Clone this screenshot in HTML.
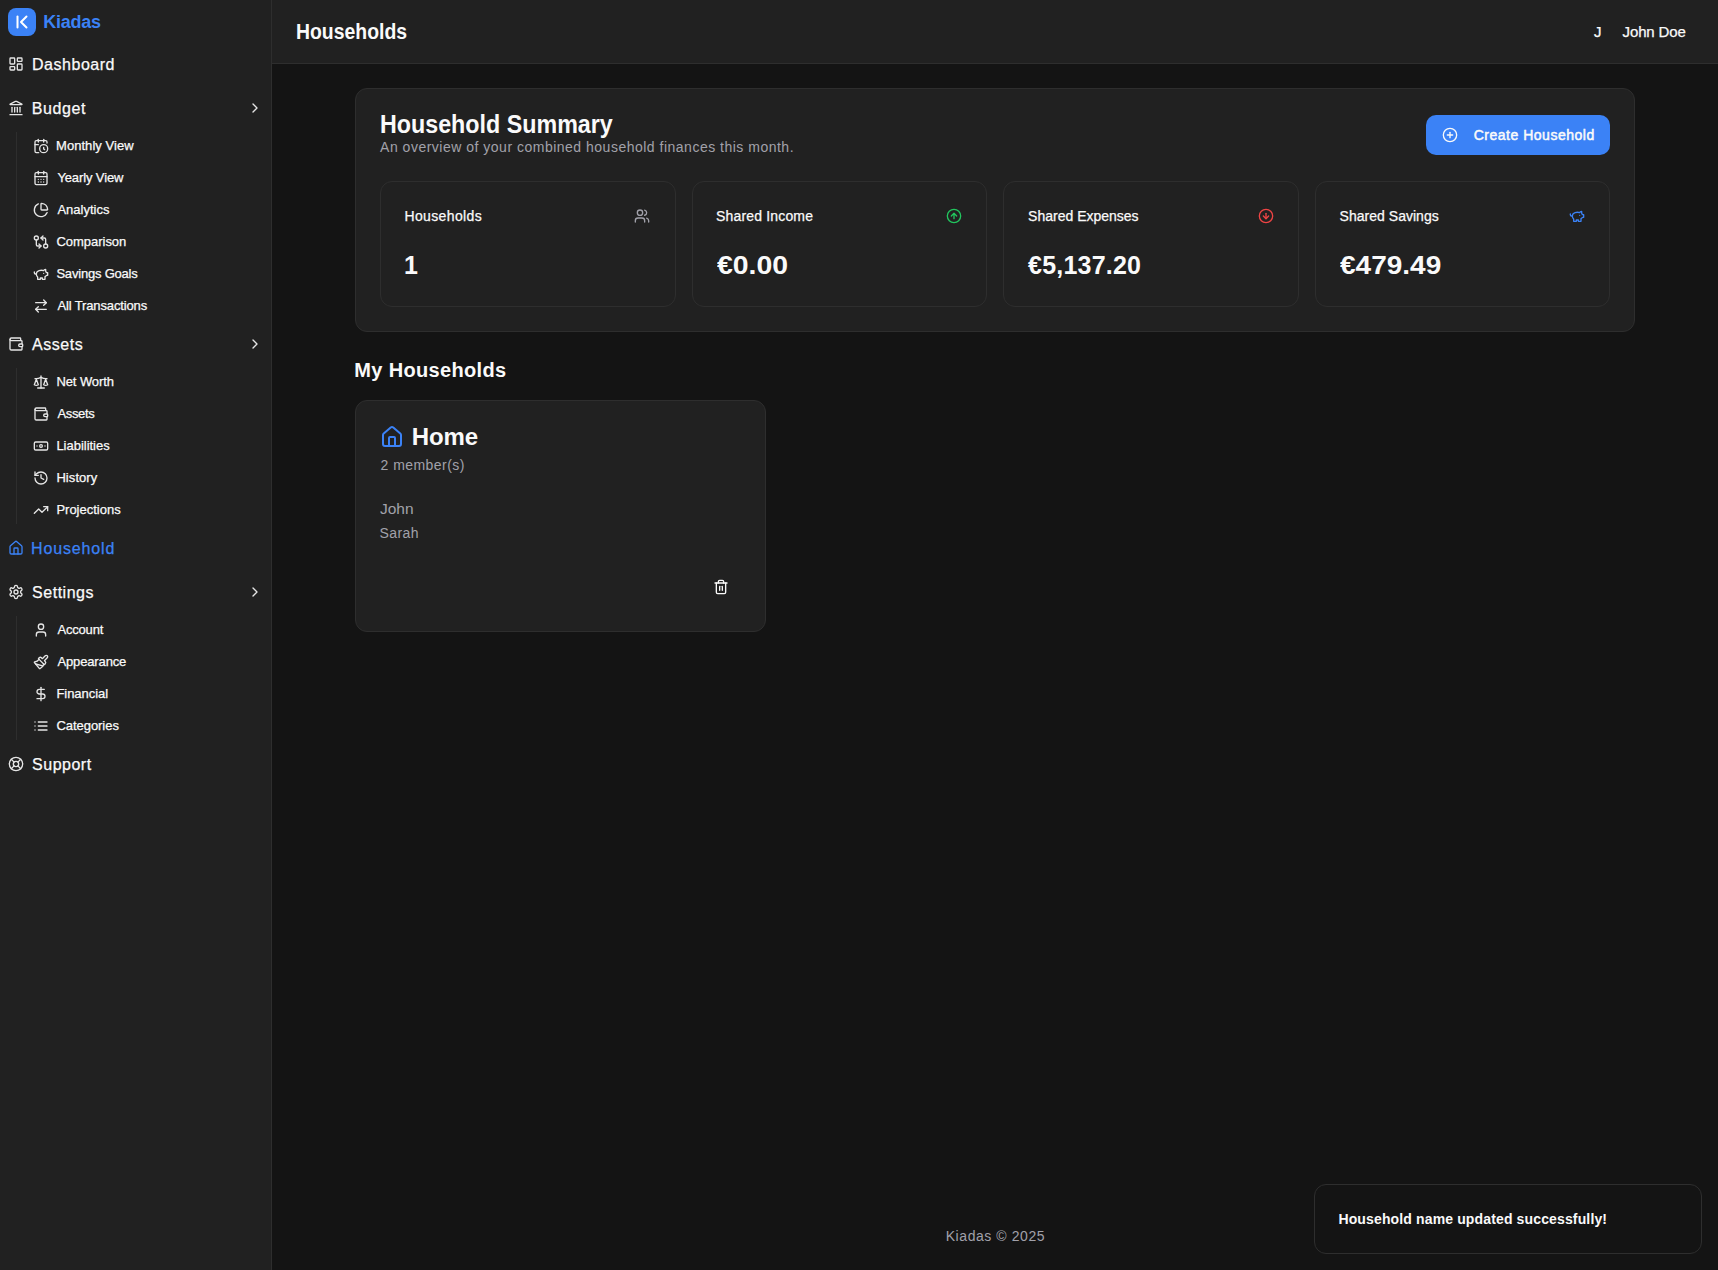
<!DOCTYPE html>
<html><head><meta charset="utf-8">
<style>
*{box-sizing:border-box;margin:0;padding:0}
html,body{width:1718px;height:1270px;overflow:hidden;background:#141414;font-family:"Liberation Sans",sans-serif;color:#fafafa}
.abs{position:absolute}
svg.i{position:absolute;fill:none;stroke:currentColor;stroke-linecap:round;stroke-linejoin:round}
.t{position:absolute;white-space:nowrap;line-height:1}
</style></head>
<body>
<div class="abs" style="left:0px;top:0px;width:272px;height:1270px;background:#212121;border-radius:0px;border-right:1px solid #2e2e2e"></div>
<div class="abs" style="left:8px;top:8px;width:28px;height:28px;background:#3b82f6;border-radius:8px"></div>
<svg class="i" style="left:8px;top:8px;color:#fff" width="28" height="28" viewBox="0 0 28 28" stroke-width="2"><path d="M9.5 8.5V19.5"/><path d="M18.5 8.5 13 14l5.5 5.5"/></svg>
<div class="t" style="left:43.30px;top:13.00px;font-size:18px;font-weight:700;color:#3b82f6;letter-spacing:-0.24px">Kiadas</div>
<svg class="i" style="left:8px;top:56px;color:#e5e5e5" width="16" height="16" viewBox="0 0 24 24" stroke-width="2"><rect width="7" height="9" x="3" y="3" rx="1"/><rect width="7" height="5" x="14" y="3" rx="1"/><rect width="7" height="9" x="14" y="12" rx="1"/><rect width="7" height="5" x="3" y="16" rx="1"/></svg>
<div class="t" style="left:32.00px;top:56.50px;font-size:16px;font-weight:400;color:#fafafa;letter-spacing:0.53px;-webkit-text-stroke:0.25px currentColor">Dashboard</div>
<svg class="i" style="left:8px;top:100px;color:#e5e5e5" width="16" height="16" viewBox="0 0 24 24" stroke-width="2"><path d="M10 18v-7"/><path d="M11.12 2.198a2 2 0 0 1 1.76.006l7.866 3.847c.476.233.31.949-.22.949H3.474c-.53 0-.695-.716-.22-.949z"/><path d="M14 18v-7"/><path d="M18 18v-7"/><path d="M3 22h18"/><path d="M6 18v-7"/></svg>
<div class="t" style="left:31.70px;top:100.50px;font-size:16px;font-weight:400;color:#fafafa;letter-spacing:0.60px;-webkit-text-stroke:0.25px currentColor">Budget</div>
<svg class="i" style="left:247px;top:100px;color:#e5e5e5" width="16" height="16" viewBox="0 0 24 24" stroke-width="2"><path d="m9 18 6-6-6-6"/></svg>
<div class="abs" style="left:16px;top:132px;width:1px;height:188px;background:#2e2e2e;border-radius:0px"></div>
<svg class="i" style="left:33px;top:138px;color:#e5e5e5" width="16" height="16" viewBox="0 0 24 24" stroke-width="2"><path d="M21 7.5V6a2 2 0 0 0-2-2H5a2 2 0 0 0-2 2v14a2 2 0 0 0 2 2h3.5"/><path d="M16 2v4"/><path d="M8 2v4"/><path d="M3 10h5"/><path d="M17.5 17.5 16 16.3V14"/><circle cx="16" cy="16" r="6"/></svg>
<div class="t" style="left:56.00px;top:139.00px;font-size:13px;font-weight:400;color:#fafafa;letter-spacing:0.05px;-webkit-text-stroke:0.25px currentColor">Monthly View</div>
<svg class="i" style="left:33px;top:170px;color:#e5e5e5" width="16" height="16" viewBox="0 0 24 24" stroke-width="2"><path d="M8 2v4"/><path d="M16 2v4"/><rect width="18" height="18" x="3" y="4" rx="2"/><path d="M3 10h18"/><path d="M8 14h.01"/><path d="M12 14h.01"/><path d="M16 14h.01"/><path d="M8 18h.01"/><path d="M12 18h.01"/><path d="M16 18h.01"/></svg>
<div class="t" style="left:57.40px;top:171.00px;font-size:13px;font-weight:400;color:#fafafa;letter-spacing:-0.12px;-webkit-text-stroke:0.25px currentColor">Yearly View</div>
<svg class="i" style="left:33px;top:202px;color:#e5e5e5" width="16" height="16" viewBox="0 0 24 24" stroke-width="2"><path d="M21 12c.552 0 1.005-.449.95-.998a10 10 0 0 0-8.953-8.951c-.55-.055-.998.398-.998.95v8a1 1 0 0 0 1 1z"/><path d="M21.21 15.89A10 10 0 1 1 8 2.83"/></svg>
<div class="t" style="left:57.40px;top:203.00px;font-size:13px;font-weight:400;color:#fafafa;-webkit-text-stroke:0.25px currentColor">Analytics</div>
<svg class="i" style="left:33px;top:234px;color:#e5e5e5" width="16" height="16" viewBox="0 0 24 24" stroke-width="2"><circle cx="5" cy="6" r="3"/><path d="M12 6h5a2 2 0 0 1 2 2v7"/><path d="m15 9-3-3 3-3"/><circle cx="19" cy="18" r="3"/><path d="M12 18H7a2 2 0 0 1-2-2V9"/><path d="m9 15 3 3-3 3"/></svg>
<div class="t" style="left:56.40px;top:235.00px;font-size:13px;font-weight:400;color:#fafafa;letter-spacing:-0.02px;-webkit-text-stroke:0.25px currentColor">Comparison</div>
<svg class="i" style="left:33px;top:266px;color:#e5e5e5" width="16" height="16" viewBox="0 0 24 24" stroke-width="2"><path d="M19 5c-1.5 0-2.8 1.4-3 2-3.5-1.5-11-.3-11 5 0 1.8 0 3 2 4.5V20h4v-2h3v2h4v-4c1-.5 1.7-1 2-2h2v-4h-2c0-1-.5-1.5-1-2V5z"/><path d="M2 9v1c0 1.1.9 2 2 2h1"/><path d="M16 11h.01"/></svg>
<div class="t" style="left:56.40px;top:267.00px;font-size:13px;font-weight:400;color:#fafafa;letter-spacing:-0.20px;-webkit-text-stroke:0.25px currentColor">Savings Goals</div>
<svg class="i" style="left:33px;top:298px;color:#e5e5e5" width="16" height="16" viewBox="0 0 24 24" stroke-width="2"><path d="m16 3 4 4-4 4"/><path d="M20 7H4"/><path d="m8 21-4-4 4-4"/><path d="M4 17h16"/></svg>
<div class="t" style="left:57.40px;top:299.00px;font-size:13px;font-weight:400;color:#fafafa;letter-spacing:-0.13px;-webkit-text-stroke:0.25px currentColor">All Transactions</div>
<svg class="i" style="left:8px;top:336px;color:#e5e5e5" width="16" height="16" viewBox="0 0 24 24" stroke-width="2"><path d="M19 7V4a1 1 0 0 0-1-1H5a2 2 0 0 0 0 4h15a1 1 0 0 1 1 1v4h-3a2 2 0 0 0 0 4h3a1 1 0 0 0 1-1v-2a1 1 0 0 0-1-1"/><path d="M3 5v14a2 2 0 0 0 2 2h15a1 1 0 0 0 1-1v-4"/></svg>
<div class="t" style="left:32.10px;top:336.50px;font-size:16px;font-weight:400;color:#fafafa;letter-spacing:0.52px;-webkit-text-stroke:0.25px currentColor">Assets</div>
<svg class="i" style="left:247px;top:336px;color:#e5e5e5" width="16" height="16" viewBox="0 0 24 24" stroke-width="2"><path d="m9 18 6-6-6-6"/></svg>
<div class="abs" style="left:16px;top:368px;width:1px;height:156px;background:#2e2e2e;border-radius:0px"></div>
<svg class="i" style="left:33px;top:374px;color:#e5e5e5" width="16" height="16" viewBox="0 0 24 24" stroke-width="2"><path d="m16 16 3-8 3 8c-.87.65-1.92 1-3 1s-2.13-.35-3-1Z"/><path d="m2 16 3-8 3 8c-.87.65-1.92 1-3 1s-2.13-.35-3-1Z"/><path d="M7 21h10"/><path d="M12 3v18"/><path d="M3 7h2c2 0 5-1 7-2 2 1 5 2 7 2h2"/></svg>
<div class="t" style="left:56.40px;top:375.00px;font-size:13px;font-weight:400;color:#fafafa;letter-spacing:-0.08px;-webkit-text-stroke:0.25px currentColor">Net Worth</div>
<svg class="i" style="left:33px;top:406px;color:#e5e5e5" width="16" height="16" viewBox="0 0 24 24" stroke-width="2"><path d="M19 7V4a1 1 0 0 0-1-1H5a2 2 0 0 0 0 4h15a1 1 0 0 1 1 1v4h-3a2 2 0 0 0 0 4h3a1 1 0 0 0 1-1v-2a1 1 0 0 0-1-1"/><path d="M3 5v14a2 2 0 0 0 2 2h15a1 1 0 0 0 1-1v-4"/></svg>
<div class="t" style="left:57.40px;top:407.00px;font-size:13px;font-weight:400;color:#fafafa;letter-spacing:-0.32px;-webkit-text-stroke:0.25px currentColor">Assets</div>
<svg class="i" style="left:33px;top:438px;color:#e5e5e5" width="16" height="16" viewBox="0 0 24 24" stroke-width="2"><rect width="20" height="12" x="2" y="6" rx="2"/><circle cx="12" cy="12" r="2"/><path d="M6 12h.01M18 12h.01"/></svg>
<div class="t" style="left:56.40px;top:439.00px;font-size:13px;font-weight:400;color:#fafafa;letter-spacing:-0.02px;-webkit-text-stroke:0.25px currentColor">Liabilities</div>
<svg class="i" style="left:33px;top:470px;color:#e5e5e5" width="16" height="16" viewBox="0 0 24 24" stroke-width="2"><path d="M3 12a9 9 0 1 0 9-9 9.75 9.75 0 0 0-6.74 2.74L3 8"/><path d="M3 3v5h5"/><path d="M12 7v5l4 2"/></svg>
<div class="t" style="left:56.40px;top:471.00px;font-size:13px;font-weight:400;color:#fafafa;letter-spacing:0.07px;-webkit-text-stroke:0.25px currentColor">History</div>
<svg class="i" style="left:33px;top:502px;color:#e5e5e5" width="16" height="16" viewBox="0 0 24 24" stroke-width="2"><polyline points="22 7 13.5 15.5 8.5 10.5 2 17"/><polyline points="16 7 22 7 22 13"/></svg>
<div class="t" style="left:56.40px;top:503.00px;font-size:13px;font-weight:400;color:#fafafa;-webkit-text-stroke:0.25px currentColor">Projections</div>
<svg class="i" style="left:8px;top:540px;color:#3b82f6" width="16" height="16" viewBox="0 0 24 24" stroke-width="2"><path d="M15 21v-8a1 1 0 0 0-1-1h-4a1 1 0 0 0-1 1v8"/><path d="M3 10a2 2 0 0 1 .709-1.528l7-5.999a2 2 0 0 1 2.582 0l7 5.999A2 2 0 0 1 21 10v9a2 2 0 0 1-2 2H5a2 2 0 0 1-2-2z"/></svg>
<div class="t" style="left:31.10px;top:540.50px;font-size:16px;font-weight:400;color:#3b82f6;letter-spacing:0.85px;-webkit-text-stroke:0.25px currentColor">Household</div>
<svg class="i" style="left:8px;top:584px;color:#e5e5e5" width="16" height="16" viewBox="0 0 24 24" stroke-width="2"><path d="M12.22 2h-.44a2 2 0 0 0-2 2v.18a2 2 0 0 1-1 1.73l-.43.25a2 2 0 0 1-2 0l-.15-.08a2 2 0 0 0-2.73.73l-.22.38a2 2 0 0 0 .73 2.73l.15.1a2 2 0 0 1 1 1.72v.51a2 2 0 0 1-1 1.74l-.15.09a2 2 0 0 0-.73 2.73l.22.38a2 2 0 0 0 2.73.73l.15-.08a2 2 0 0 1 2 0l.43.25a2 2 0 0 1 1 1.73V20a2 2 0 0 0 2 2h.44a2 2 0 0 0 2-2v-.18a2 2 0 0 1 1-1.73l.43-.25a2 2 0 0 1 2 0l.15.08a2 2 0 0 0 2.73-.73l.22-.39a2 2 0 0 0-.73-2.73l-.15-.08a2 2 0 0 1-1-1.74v-.5a2 2 0 0 1 1-1.74l.15-.09a2 2 0 0 0 .73-2.73l-.22-.38a2 2 0 0 0-2.73-.73l-.15.08a2 2 0 0 1-2 0l-.43-.25a2 2 0 0 1-1-1.73V4a2 2 0 0 0-2-2z"/><circle cx="12" cy="12" r="3"/></svg>
<div class="t" style="left:32.10px;top:584.50px;font-size:16px;font-weight:400;color:#fafafa;letter-spacing:0.51px;-webkit-text-stroke:0.25px currentColor">Settings</div>
<svg class="i" style="left:247px;top:584px;color:#e5e5e5" width="16" height="16" viewBox="0 0 24 24" stroke-width="2"><path d="m9 18 6-6-6-6"/></svg>
<div class="abs" style="left:16px;top:616px;width:1px;height:124px;background:#2e2e2e;border-radius:0px"></div>
<svg class="i" style="left:33px;top:622px;color:#e5e5e5" width="16" height="16" viewBox="0 0 24 24" stroke-width="2"><path d="M19 21v-2a4 4 0 0 0-4-4H9a4 4 0 0 0-4 4v2"/><circle cx="12" cy="7" r="4"/></svg>
<div class="t" style="left:57.40px;top:623.00px;font-size:13px;font-weight:400;color:#fafafa;letter-spacing:-0.17px;-webkit-text-stroke:0.25px currentColor">Account</div>
<svg class="i" style="left:33px;top:654px;color:#e5e5e5" width="16" height="16" viewBox="0 0 24 24" stroke-width="2"><path d="m14.622 17.897-10.68-2.913"/><path d="M18.376 2.622a1 1 0 1 1 3.002 3.002L17.36 9.643a.5.5 0 0 0 0 .707l.944.944a2.41 2.41 0 0 1 0 3.408l-.944.944a.5.5 0 0 1-.707 0L8.354 7.348a.5.5 0 0 1 0-.707l.944-.944a2.41 2.41 0 0 1 3.408 0l.944.944a.5.5 0 0 0 .707 0z"/><path d="M9 8c-1.804 2.71-3.97 3.46-6.583 3.948a.507.507 0 0 0-.302.819l7.32 8.883a1 1 0 0 0 1.185.204C12.735 20.405 16 16.792 16 15"/></svg>
<div class="t" style="left:57.40px;top:655.00px;font-size:13px;font-weight:400;color:#fafafa;letter-spacing:-0.13px;-webkit-text-stroke:0.25px currentColor">Appearance</div>
<svg class="i" style="left:33px;top:686px;color:#e5e5e5" width="16" height="16" viewBox="0 0 24 24" stroke-width="2"><line x1="12" x2="12" y1="2" y2="22"/><path d="M17 5H9.5a3.5 3.5 0 0 0 0 7h5a3.5 3.5 0 0 1 0 7H6"/></svg>
<div class="t" style="left:56.40px;top:687.00px;font-size:13px;font-weight:400;color:#fafafa;letter-spacing:-0.03px;-webkit-text-stroke:0.25px currentColor">Financial</div>
<svg class="i" style="left:33px;top:718px;color:#e5e5e5" width="16" height="16" viewBox="0 0 24 24" stroke-width="2"><path d="M3 12h.01"/><path d="M3 18h.01"/><path d="M3 6h.01"/><path d="M8 12h13"/><path d="M8 18h13"/><path d="M8 6h13"/></svg>
<div class="t" style="left:56.40px;top:719.00px;font-size:13px;font-weight:400;color:#fafafa;letter-spacing:-0.04px;-webkit-text-stroke:0.25px currentColor">Categories</div>
<svg class="i" style="left:8px;top:756px;color:#e5e5e5" width="16" height="16" viewBox="0 0 24 24" stroke-width="2"><circle cx="12" cy="12" r="10"/><path d="m4.93 4.93 4.24 4.24"/><path d="m14.83 9.17 4.24-4.24"/><path d="m14.83 14.83 4.24 4.24"/><path d="m9.17 14.83-4.24 4.24"/><circle cx="12" cy="12" r="4"/></svg>
<div class="t" style="left:32.10px;top:756.50px;font-size:16px;font-weight:400;color:#fafafa;letter-spacing:0.50px;-webkit-text-stroke:0.25px currentColor">Support</div>
<div class="abs" style="left:272px;top:0px;width:1446px;height:64px;background:#212121;border-radius:0px;border-bottom:1px solid #2e2e2e"></div>
<div class="t" style="left:296.00px;top:20.50px;font-size:22px;font-weight:700;color:#fafafa;transform-origin:0 0;transform:scaleX(0.8823)">Households</div>
<div class="t" style="left:1594.00px;top:24.00px;font-size:15px;font-weight:400;color:#fafafa;-webkit-text-stroke:0.25px currentColor">J</div>
<div class="t" style="left:1622.60px;top:24.00px;font-size:15px;font-weight:400;color:#fafafa;letter-spacing:-0.14px;-webkit-text-stroke:0.25px currentColor">John Doe</div>
<div class="abs" style="left:355px;top:88px;width:1280px;height:244px;background:#212121;border-radius:12px;border:1px solid #2e2e2e"></div>
<div class="t" style="left:380.00px;top:111.50px;font-size:25px;font-weight:700;color:#fafafa;transform-origin:0 0;transform:scaleX(0.9309)">Household Summary</div>
<div class="t" style="left:380.10px;top:140.00px;font-size:14px;font-weight:400;color:#a1a1aa;letter-spacing:0.50px">An overview of your combined household finances this month.</div>
<div class="abs" style="left:1426px;top:115px;width:184px;height:40px;background:#3b82f6;border-radius:10px"></div>
<svg class="i" style="left:1442px;top:127px;color:#fafafa" width="16" height="16" viewBox="0 0 24 24" stroke-width="2"><circle cx="12" cy="12" r="10"/><path d="M8 12h8"/><path d="M12 8v8"/></svg>
<div class="t" style="left:1473.70px;top:128.00px;font-size:14px;font-weight:400;color:#fafafa;letter-spacing:0.51px;-webkit-text-stroke:0.5px currentColor">Create Household</div>
<div class="abs" style="left:380.0px;top:181px;width:295.5px;height:126px;background:#212121;border-radius:12px;border:1px solid #2e2e2e"></div>
<div class="t" style="left:404.50px;top:209.00px;font-size:14px;font-weight:400;color:#fafafa;letter-spacing:0.36px;-webkit-text-stroke:0.25px currentColor">Households</div>
<svg class="i" style="left:634px;top:208px;color:#a1a1aa" width="16" height="16" viewBox="0 0 24 24" stroke-width="2"><path d="M16 21v-2a4 4 0 0 0-4-4H6a4 4 0 0 0-4 4v2"/><circle cx="9" cy="7" r="4"/><path d="M22 21v-2a4 4 0 0 0-3-3.87"/><path d="M16 3.13a4 4 0 0 1 0 7.75"/></svg>
<div class="t" style="left:404.00px;top:252.50px;font-size:25px;font-weight:700;color:#fafafa">1</div>
<div class="abs" style="left:691.5px;top:181px;width:295.5px;height:126px;background:#212121;border-radius:12px;border:1px solid #2e2e2e"></div>
<div class="t" style="left:716.00px;top:209.00px;font-size:14px;font-weight:400;color:#fafafa;letter-spacing:0.17px;-webkit-text-stroke:0.25px currentColor">Shared Income</div>
<svg class="i" style="left:946px;top:208px;color:#22c55e" width="16" height="16" viewBox="0 0 24 24" stroke-width="2"><circle cx="12" cy="12" r="10"/><path d="m16 12-4-4-4 4"/><path d="M12 16V8"/></svg>
<div class="t" style="left:717.30px;top:252.50px;font-size:25px;font-weight:700;color:#fafafa;transform-origin:0 0;transform:scaleX(1.1356)">€0.00</div>
<div class="abs" style="left:1003.0px;top:181px;width:295.5px;height:126px;background:#212121;border-radius:12px;border:1px solid #2e2e2e"></div>
<div class="t" style="left:1028.10px;top:209.00px;font-size:14px;font-weight:400;color:#fafafa;-webkit-text-stroke:0.25px currentColor">Shared Expenses</div>
<svg class="i" style="left:1258px;top:208px;color:#ef4444" width="16" height="16" viewBox="0 0 24 24" stroke-width="2"><circle cx="12" cy="12" r="10"/><path d="M12 8v8"/><path d="m8 12 4 4 4-4"/></svg>
<div class="t" style="left:1028.10px;top:252.50px;font-size:25px;font-weight:700;color:#fafafa;letter-spacing:0.20px">€5,137.20</div>
<div class="abs" style="left:1314.5px;top:181px;width:295.5px;height:126px;background:#212121;border-radius:12px;border:1px solid #2e2e2e"></div>
<div class="t" style="left:1339.60px;top:209.00px;font-size:14px;font-weight:400;color:#fafafa;letter-spacing:0.02px;-webkit-text-stroke:0.25px currentColor">Shared Savings</div>
<svg class="i" style="left:1569px;top:208px;color:#3b82f6" width="16" height="16" viewBox="0 0 24 24" stroke-width="2"><path d="M19 5c-1.5 0-2.8 1.4-3 2-3.5-1.5-11-.3-11 5 0 1.8 0 3 2 4.5V20h4v-2h3v2h4v-4c1-.5 1.7-1 2-2h2v-4h-2c0-1-.5-1.5-1-2V5z"/><path d="M2 9v1c0 1.1.9 2 2 2h1"/><path d="M16 11h.01"/></svg>
<div class="t" style="left:1339.90px;top:252.50px;font-size:25px;font-weight:700;color:#fafafa;transform-origin:0 0;transform:scaleX(1.1201)">€479.49</div>
<div class="t" style="left:354.30px;top:360.00px;font-size:20px;font-weight:700;color:#fafafa;letter-spacing:0.33px">My Households</div>
<div class="abs" style="left:355px;top:400px;width:411px;height:232px;background:#212121;border-radius:12px;border:1px solid #2e2e2e"></div>
<svg class="i" style="left:380px;top:425px;color:#3b82f6" width="24" height="24" viewBox="0 0 24 24" stroke-width="2"><path d="M15 21v-8a1 1 0 0 0-1-1h-4a1 1 0 0 0-1 1v8"/><path d="M3 10a2 2 0 0 1 .709-1.528l7-5.999a2 2 0 0 1 2.582 0l7 5.999A2 2 0 0 1 21 10v9a2 2 0 0 1-2 2H5a2 2 0 0 1-2-2z"/></svg>
<div class="t" style="left:411.80px;top:424.50px;font-size:24px;font-weight:700;color:#fafafa;letter-spacing:-0.13px">Home</div>
<div class="t" style="left:380.60px;top:458.00px;font-size:14px;font-weight:400;color:#a1a1aa;letter-spacing:0.44px">2 member(s)</div>
<div class="t" style="left:379.70px;top:502.00px;font-size:14px;font-weight:400;color:#a1a1aa;transform-origin:0 0;transform:scaleX(1.1074)">John</div>
<div class="t" style="left:379.50px;top:526.00px;font-size:14px;font-weight:400;color:#a1a1aa;letter-spacing:0.40px">Sarah</div>
<svg class="i" style="left:713px;top:579px;color:#fafafa" width="16" height="16" viewBox="0 0 24 24" stroke-width="2"><path d="M3 6h18"/><path d="M19 6v14c0 1-1 2-2 2H7c-1 0-2-1-2-2V6"/><path d="M8 6V4c0-1 1-2 2-2h4c1 0 2 1 2 2v2"/><line x1="10" x2="10" y1="11" y2="17"/><line x1="14" x2="14" y1="11" y2="17"/></svg>
<div class="t" style="left:945.70px;top:1229.00px;font-size:14px;font-weight:400;color:#a1a1aa;letter-spacing:0.57px">Kiadas © 2025</div>
<div class="abs" style="left:1314px;top:1184px;width:388px;height:70px;background:#141414;border-radius:12px;border:1px solid #2e2e2e"></div>
<div class="t" style="left:1338.40px;top:1212.00px;font-size:14px;font-weight:700;color:#fafafa;letter-spacing:0.14px">Household name updated successfully!</div>
</body></html>
